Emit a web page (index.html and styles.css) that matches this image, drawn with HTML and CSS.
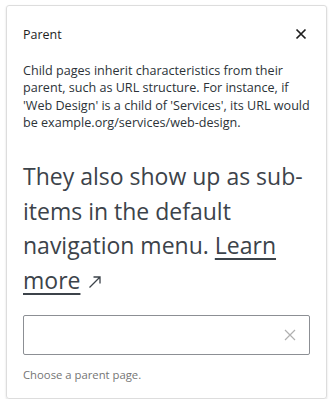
FILE: index.html
```html
<!DOCTYPE html>
<html lang="en">
<head>
    <meta charset="UTF-8">
    <meta name="viewport" content="width=device-width, initial-scale=1.0">
    <title>Parent</title>
    <link rel="stylesheet" href="styles.css">
</head>
<body>
    <div class="popover">
        <div class="popover-header">
            <h2>Parent</h2>
            <button type="button" class="close" aria-label="Close">
                <svg width="12" height="12" viewBox="0 0 12 12"><path d="M1.5 1.5 L10.5 10.5 M10.5 1.5 L1.5 10.5" stroke="#1e1e1e" stroke-width="1.7"/></svg>
            </button>
        </div>
        <p class="desc">Child pages inherit characteristics from their parent, such as URL structure. For instance, if 'Web Design' is a child of 'Services', its URL would be example.org/services/web-design.</p>
        <p class="lead">They also show up as sub-items in the default navigation menu. <a href="#">Learn more</a> <svg class="ext" width="14" height="14" viewBox="0 0 14 14"><path d="M1.5 12.5 L12 2 M5.5 2 H12 V8.5" fill="none" stroke="#3c434a" stroke-width="1.3"/></svg></p>
        <div class="combo">
            <input type="text" aria-label="Parent page">
            <svg class="clear" width="12" height="12" viewBox="0 0 12 12"><path d="M1 1 L11 11 M11 1 L1 11" stroke="#b0b0b0" stroke-width="1.2"/></svg>
        </div>
        <p class="help">Choose a parent page.</p>
    </div>
</body>
</html>
```

FILE: styles.css
```css
body {
    margin: 0;
    background: #fff;
    font-family: "Open Sans", "Noto Sans", sans-serif;
    color: #1e1e1e;
}
.popover {
    margin: 5px 5px 0 6px;
    height: 394px;
    box-sizing: border-box;
    border: 1px solid #ddd;
    border-radius: 3px;
    box-shadow: 0 1px 2px rgba(0,0,0,0.15);
    padding: 0 16px;
}
.popover-header {
    display: flex;
    align-items: center;
    justify-content: space-between;
    height: 56px;
}
.popover-header h2 {
    margin: 0;
    font-size: 12.5px;
    font-weight: 400;
}
.close {
    border: none;
    background: none;
    padding: 0;
    margin-right: 3px;
    display: flex;
}
.desc {
    margin: 0;
    font-size: 12.6px;
    line-height: 17.3px;
    color: #2c3338;
}
.lead {
    margin: 28px 0 0;
    font-size: 23px;
    line-height: 34.5px;
    color: #3c434a;
}
.lead a {
    color: #3c434a;
    text-decoration: underline;
    text-underline-offset: 4px;
}
.ext {
    margin-left: 2px;
}
.combo {
    position: relative;
    margin-top: 18px;
}
.combo input {
    width: 100%;
    height: 40px;
    box-sizing: border-box;
    border: 1px solid #8c8f94;
    border-radius: 2px;
    font: inherit;
    padding: 0 36px 0 10px;
}
.clear {
    position: absolute;
    right: 14px;
    top: 14px;
}
.help {
    margin: 12px 0 0;
    font-size: 11.3px;
    color: #757575;
}
```
